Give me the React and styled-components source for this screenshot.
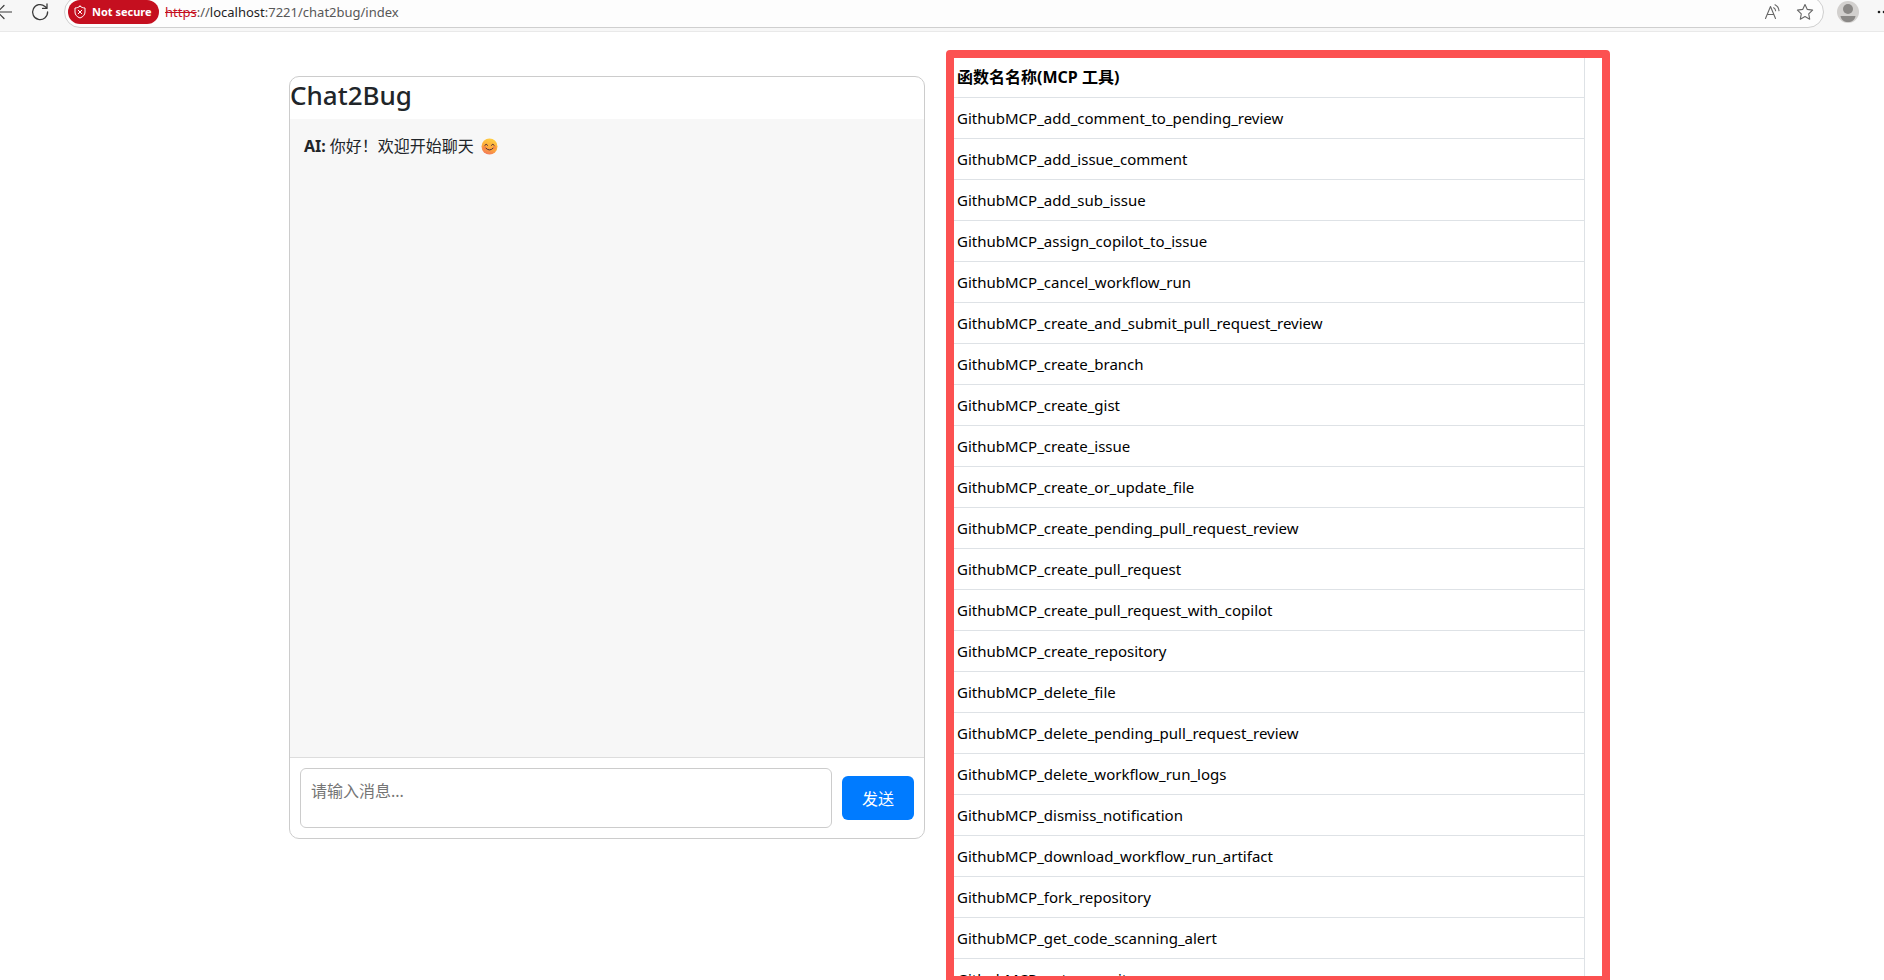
import React, { useState } from "react";
import styled, { createGlobalStyle } from "styled-components";

const GlobalStyle = createGlobalStyle`
  *, *::before, *::after { box-sizing: border-box; }
  body {
    margin: 0;
    background: #fff;
    color: #212529;
    font-family: "Noto Sans", "Noto Sans CJK SC", sans-serif;
    font-size: 15px;
    line-height: 24px;
  }
`;

const Shell = styled.div`
  display: flex;
  flex-direction: column;
  height: 100vh;
  overflow: hidden;
`;

const BrowserBar = styled.header`
  display: flex;
  flex: none;
  align-items: flex-start;
  height: 32px;
  margin: 0 -20px 0 -8px;
  background: #f7f7f7;
  border-bottom: 1px solid #e9e9e9;
  overflow: hidden;
`;

const IconButton = styled.button`
  display: flex;
  flex: none;
  align-items: center;
  justify-content: center;
  width: ${(p) => p.$width}px;
  height: 24px;
  padding: 0;
  border: 0;
  background: none;
  color: ${(p) => p.$color || "#3b3b3b"};
  svg { flex: none; }
`;

const AddressBar = styled.div`
  display: flex;
  flex: 1;
  align-items: center;
  height: 32px;
  margin: -4px 8px 0 0;
  padding: 0 2px 0 3px;
  background: #fdfdfd;
  border: 1px solid #cfcfcf;
  border-radius: 16px;
`;

const SecurityBadge = styled.button`
  display: flex;
  align-items: center;
  gap: 6px;
  width: 91px;
  height: 24px;
  padding: 0 6px;
  border: 0;
  border-radius: 12px;
  background: #c50f1f;
  color: #fff;
  font: 700 11px/24px "Noto Sans", sans-serif;
  white-space: nowrap;
`;

const Url = styled.span`
  flex: 1;
  margin-left: 6px;
  color: #575757;
  font-size: 13px;
  s { color: #c50f1f; }
  b { color: #1f1f1f; font-weight: 400; }
`;

const Page = styled.main`
  display: grid;
  grid-template-columns: minmax(0, 636fr) minmax(0, 664fr);
  grid-template-rows: minmax(0, 1fr);
  gap: 21px;
  flex: 1;
  min-height: 0;
  width: 100%;
  max-width: 1336px;
  margin: 18px auto -4px;
  padding-left: 15px;
`;

const ChatCard = styled.section`
  align-self: start;
  display: flex;
  flex-direction: column;
  margin-top: 26px;
  border: 1px solid #ccc;
  border-radius: 10px;
  overflow: hidden;
`;

const Title = styled.h1`
  margin: 0 0 6px;
  font-size: 26px;
  font-weight: 500;
  line-height: 36px;
`;

const Messages = styled.div`
  height: 638px;
  padding: 15px 14px;
  background: #f7f7f7;
`;

const Message = styled.p`
  display: flex;
  align-items: center;
  margin: 0;
  font-size: 16px;
  strong { margin-right: 4px; font-weight: 700; }
  svg { margin-left: 7px; }
`;

const Composer = styled.form`
  display: flex;
  align-items: center;
  gap: 10px;
  padding: 10px;
  border-top: 1px solid #ddd;
`;

const MessageInput = styled.textarea`
  flex: 1;
  min-width: 0;
  height: 60px;
  padding: 10px;
  border: 1px solid #ccc;
  border-radius: 6px;
  resize: none;
  font: 16px/24px "Noto Sans", "Noto Sans CJK SC", sans-serif;
  &::placeholder { color: #757575; opacity: 1; }
`;

const SendButton = styled.button`
  flex: none;
  width: 72px;
  height: 44px;
  border: 0;
  border-radius: 6px;
  background: #007bff;
  color: #fff;
  font: 16px/24px "Noto Sans CJK SC", sans-serif;
`;

const ToolFrame = styled.section`
  min-height: 0;
  padding-right: 17px;
  border: 8px solid #fc5151;
  border-radius: 4px;
  overflow: hidden;
`;

const ToolTable = styled.table`
  width: 100%;
  border-collapse: separate;
  border-spacing: 0;
  border-right: 1px solid #dee2e6;
  color: #000;
  text-align: left;
  th, td {
    height: 41px;
    padding: 8px 3px;
    border-bottom: 1px solid #dee2e6;
  }
  th { height: 40px; padding-top: 7px; font-size: 16px; font-weight: 700; }
`;

const tools = [
  "add_comment_to_pending_review",
  "add_issue_comment",
  "add_sub_issue",
  "assign_copilot_to_issue",
  "cancel_workflow_run",
  "create_and_submit_pull_request_review",
  "create_branch",
  "create_gist",
  "create_issue",
  "create_or_update_file",
  "create_pending_pull_request_review",
  "create_pull_request",
  "create_pull_request_with_copilot",
  "create_repository",
  "delete_file",
  "delete_pending_pull_request_review",
  "delete_workflow_run_logs",
  "dismiss_notification",
  "download_workflow_run_artifact",
  "fork_repository",
  "get_code_scanning_alert",
  "get_commit",
];

const stroke = { fill: "none", stroke: "currentColor", strokeLinecap: "round", strokeLinejoin: "round" };

const BackIcon = () => (
  <svg width="16" height="16" viewBox="0 0 16 16" {...stroke} strokeWidth="1.2">
    <path d="M15.500 8H1.500M8 1.500 1.500 8 8 14.500" />
  </svg>
);

const ReloadIcon = () => (
  <svg width="18" height="18" viewBox="0 0 18 18" {...stroke} strokeWidth="1.3">
    <path d="M16.600 9A7.500 7.500 0 1 1 14 3.400L16 5.400M16 1v4.400h-4.400" />
  </svg>
);

const ShieldIcon = () => (
  <svg width="12" height="14" viewBox="0 0 12 14" {...stroke} strokeWidth="1">
    <path d="M6 1.200C7.300 2.300 9 2.900 11 3v4c0 2.800-1.800 4.800-5 6-3.200-1.200-5-3.200-5-6V3c2-.1 3.700-.7 5-1.800Z" />
    <path d="m4.200 5.200 3.600 3.600M7.800 5.200 4.200 8.800" />
  </svg>
);

const ReadAloudIcon = () => (
  <svg width="18" height="16" viewBox="0 0 18 16" {...stroke} strokeWidth="1.1">
    <path d="m1.500 14.500 5-12 5 12M3.200 10.500h6.600M9.700 3.700c1.200.7 1.800 1.700 1.900 3M11 .8c2.400 1.200 3.800 3.300 4 6" />
  </svg>
);

const StarIcon = () => (
  <svg width="18" height="18" viewBox="0 0 18 18" {...stroke} strokeWidth="1.1">
    <path d="m9 1.500 2.300 4.900 5.300.7-3.900 3.700 1 5.400L9 13.600l-4.700 2.600 1-5.400-3.900-3.700 5.300-.7Z" />
  </svg>
);

const AvatarIcon = () => (
  <svg width="22" height="22" viewBox="0 0 22 22">
    <circle cx="11" cy="11" r="11" fill="#d2d0ce" />
    <circle cx="11" cy="8" r="5" fill="#8a8886" />
    <path d="M3.500 15h15c-.8 4-3.500 6-7.500 6s-6.700-2-7.500-6Z" fill="#8a8886" />
  </svg>
);

const DotsIcon = () => (
  <svg width="14" height="4" viewBox="0 0 14 4" fill="currentColor">
    <circle cx="2" cy="2" r="1.300" /><circle cx="7" cy="2" r="1.300" /><circle cx="12" cy="2" r="1.300" />
  </svg>
);

const SmileIcon = () => (
  <svg width="17" height="17" viewBox="0 0 17 17" role="img" aria-label="smile">
    <defs>
      <linearGradient id="face" x1="0.700" y1="0" x2="0.350" y2="1">
        <stop offset="0" stopColor="#ffd044" />
        <stop offset="0.600" stopColor="#fda83a" />
        <stop offset="1" stopColor="#f2785a" />
      </linearGradient>
    </defs>
    <circle cx="8.500" cy="8.500" r="8" fill="url(#face)" />
    <circle cx="3.500" cy="9.500" r="1.900" fill="#f4694f" opacity="0.400" />
    <circle cx="13.500" cy="9.500" r="1.900" fill="#f4694f" opacity="0.400" />
    <path d="M3.800 7.200q1.400-2.200 2.800 0M10.400 7.200q1.400-2.200 2.800 0M5 10.300q3.500 3.500 7 0" fill="none" stroke="#4b2b3a" strokeWidth="1" strokeLinecap="round" />
  </svg>
);

export default function App() {
  const [draft, setDraft] = useState("");
  return (
    <Shell>
      <GlobalStyle />
      <BrowserBar>
        <IconButton $width={24} aria-label="Back"><BackIcon /></IconButton>
        <IconButton $width={48} aria-label="Reload"><ReloadIcon /></IconButton>
        <AddressBar>
          <SecurityBadge><ShieldIcon />Not secure</SecurityBadge>
          <Url><s>https</s>://<b>localhost</b>:7221/chat2bug/index</Url>
          <IconButton $width={32} $color="#666" aria-label="Read aloud"><ReadAloudIcon /></IconButton>
          <IconButton $width={32} $color="#666" aria-label="Favorite"><StarIcon /></IconButton>
        </AddressBar>
        <IconButton $width={32} aria-label="Profile"><AvatarIcon /></IconButton>
        <IconButton $width={40} $color="#1f1f1f" aria-label="More"><DotsIcon /></IconButton>
      </BrowserBar>
      <Page>
        <ChatCard>
          <Title>Chat2Bug</Title>
          <Messages>
            <Message><strong>AI:</strong><span>你好！欢迎开始聊天</span><SmileIcon /></Message>
          </Messages>
          <Composer onSubmit={(e) => e.preventDefault()}>
            <MessageInput
              aria-label="消息"
              placeholder="请输入消息..."
              value={draft}
              onChange={(e) => setDraft(e.target.value)}
            />
            <SendButton type="submit">发送</SendButton>
          </Composer>
        </ChatCard>
        <ToolFrame>
          <ToolTable>
            <thead>
              <tr><th scope="col">函数名名称(MCP 工具)</th></tr>
            </thead>
            <tbody>
              {tools.map((name) => (
                <tr key={name}><td>GithubMCP_{name}</td></tr>
              ))}
            </tbody>
          </ToolTable>
        </ToolFrame>
      </Page>
    </Shell>
  );
}
